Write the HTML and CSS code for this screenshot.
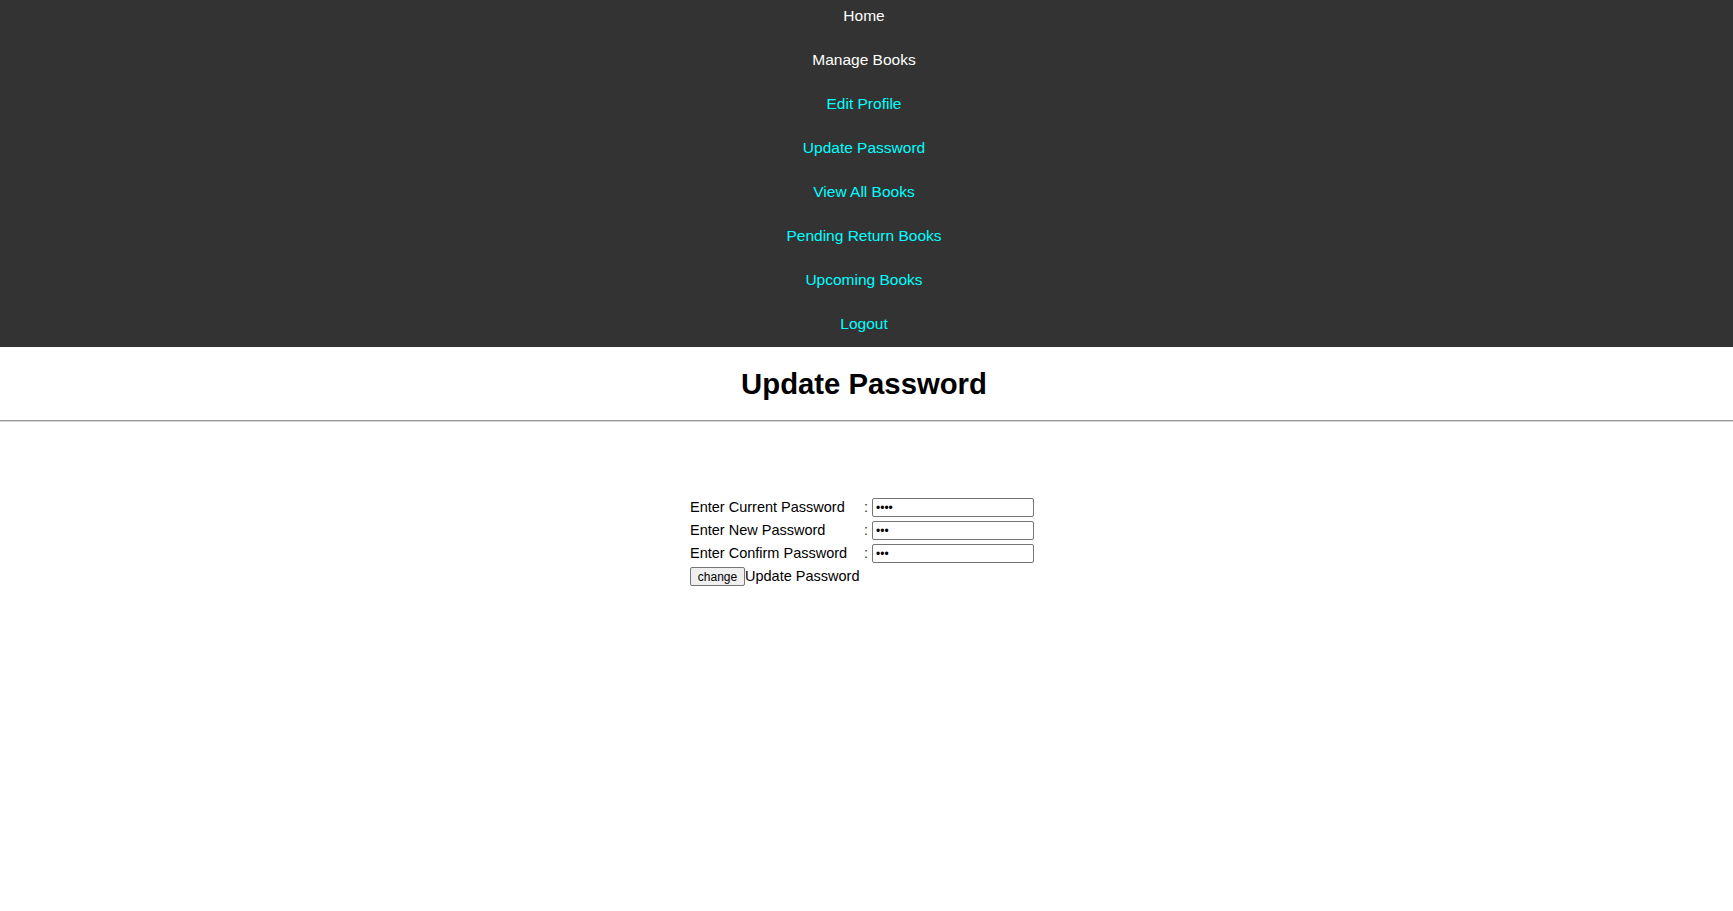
FILE: index.html
```html
<!DOCTYPE html>
<html>
<head>
<meta charset="utf-8">
<title>Update Password</title>
<link rel="stylesheet" href="styles.css">
</head>
<body>
<nav class="nav">
  <ul class="nav-list">
    <li><a class="nav-link nav-link-white" href="#">Home</a></li>
    <li><a class="nav-link nav-link-white" href="#">Manage Books</a></li>
    <li><a class="nav-link" href="#">Edit Profile</a></li>
    <li><a class="nav-link" href="#">Update Password</a></li>
    <li><a class="nav-link" href="#">View All Books</a></li>
    <li><a class="nav-link" href="#">Pending Return Books</a></li>
    <li><a class="nav-link" href="#">Upcoming Books</a></li>
    <li><a class="nav-link" href="#">Logout</a></li>
  </ul>
</nav>
<h1 class="title">Update Password</h1>
<hr class="rule">
<form class="pw-form">
  <label class="pw-label" for="cur">Enter Current Password</label>
  <span class="pw-colon">:</span>
  <input class="pw-input" id="cur" type="password" value="1234">

  <label class="pw-label" for="new">Enter New Password</label>
  <span class="pw-colon">:</span>
  <input class="pw-input" id="new" type="password" value="123">

  <label class="pw-label" for="conf">Enter Confirm Password</label>
  <span class="pw-colon">:</span>
  <input class="pw-input" id="conf" type="password" value="123">

  <div class="pw-actions"><button class="pw-button" type="button">change</button><span class="pw-action-text">Update Password</span></div>
</form>
</body>
</html>
```

FILE: styles.css
```css
html, body {
  margin: 0;
  padding: 0;
  background: #ffffff;
  font-family: "Liberation Sans", Arial, sans-serif;
  color: #000;
}

.nav {
  background: #333333;
  height: 347px;
  overflow: hidden;
}

.nav-list {
  list-style: none;
  margin: -6px 0 0 0;
  padding: 0;
}

.nav-link {
  display: block;
  text-align: center;
  padding: 13px 21px 13px 16px;
  line-height: 18px;
  font-size: 15.5px;
  color: #00ffff;
  text-decoration: none;
}

.nav-link-white {
  color: #ffffff;
}

.title {
  text-align: center;
  font-size: 29.3px;
  font-weight: bold;
  margin: 20px 0 0 0;
  padding-right: 5px;
  line-height: 34px;
}

.rule {
  margin: 19px 0 0 0;
  border: 0;
  border-top: 1px solid #9a9a9a;
  border-bottom: 1px solid #d6d6d6;
  height: 0;
}

.pw-form {
  display: grid;
  grid-template-columns: 174px 8px 162px;
  row-gap: 4px;
  align-items: center;
  width: 344px;
  margin: 76px 0 0 calc(50% - 176.5px);
  font-size: 14.5px;
}

.pw-label {
  line-height: 17px;
  white-space: nowrap;
}

.pw-colon {
  line-height: 17px;
  color: #333;
}

.pw-input {
  box-sizing: border-box;
  width: 162px;
  height: 19px;
  margin: 0;
  padding: 0 3px;
  border: 1px solid #767676;
  border-radius: 2px;
  font-size: 12px;
  font-family: "Liberation Sans", Arial, sans-serif;
  background: #fff;
}

.pw-actions {
  grid-column: 1 / span 3;
  display: flex;
  align-items: center;
}

.pw-button {
  box-sizing: border-box;
  width: 55px;
  height: 19px;
  margin: 0;
  padding: 0;
  border: 1px solid #767676;
  border-radius: 2px;
  background: #efefef;
  font-family: "Liberation Sans", Arial, sans-serif;
  font-size: 12px;
  color: #000;
}

.pw-action-text {
  line-height: 17px;
}
```
